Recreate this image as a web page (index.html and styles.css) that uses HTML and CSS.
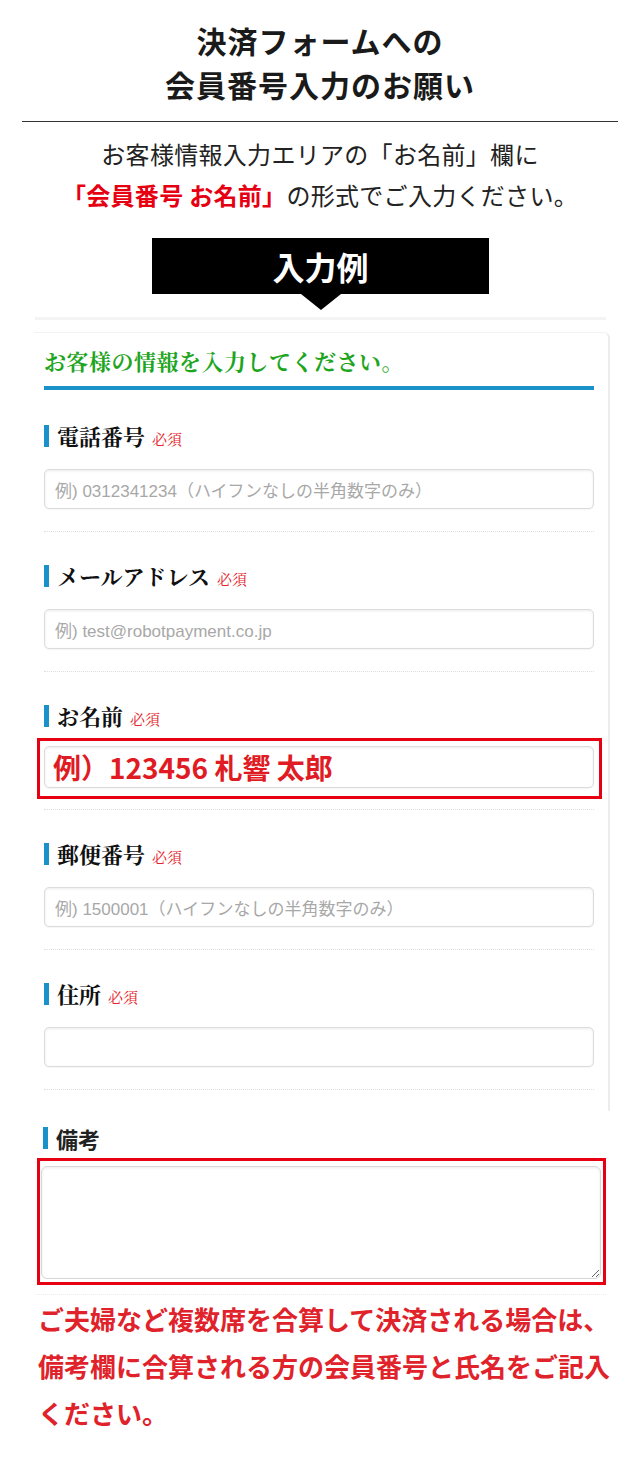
FILE: index.html
```html
<!DOCTYPE html>
<html lang="ja">
<head>
<meta charset="utf-8">
<title>決済フォームへの会員番号入力のお願い</title>
<link rel="stylesheet" href="styles.css">
</head>
<body>
<div class="page">
  <h1 class="title">決済フォームへの<br>会員番号入力のお願い</h1>
  <hr class="rule">
  <p class="intro">お客様情報入力エリアの「お名前」欄に<br><span class="em">「会員番号 お名前」</span>の形式でご入力ください。</p>
  <div class="example-wrap"><div class="example">入力例</div></div>
  <div class="shot-top"></div>
  <div class="card">
    <h2 class="card-title">お客様の情報を入力してください。</h2>
    <div class="field first">
      <div class="label"><span class="bar"></span><span class="label-text">電話番号</span><span class="req">必須</span></div>
      <div class="input placeholder">例) 0312341234（ハイフンなしの半角数字のみ）</div>
    </div>
    <div class="field">
      <div class="label"><span class="bar"></span><span class="label-text">メールアドレス</span><span class="req">必須</span></div>
      <div class="input placeholder">例) test@robotpayment.co.jp</div>
    </div>
    <div class="field name">
      <div class="label"><span class="bar"></span><span class="label-text">お名前</span><span class="req">必須</span></div>
      <div class="highlight">
        <div class="input name-input">例）123456 札響 太郎</div>
      </div>
    </div>
    <div class="field">
      <div class="label"><span class="bar"></span><span class="label-text">郵便番号</span><span class="req">必須</span></div>
      <div class="input placeholder">例) 1500001（ハイフンなしの半角数字のみ）</div>
    </div>
    <div class="field">
      <div class="label"><span class="bar"></span><span class="label-text">住所</span><span class="req">必須</span></div>
      <div class="input"></div>
    </div>
  </div>
  <div class="remarks">
    <div class="label sans"><span class="bar"></span><span class="label-text">備考</span></div>
    <div class="red-box"><textarea class="textarea"></textarea></div>
  </div>
  <p class="note">ご夫婦など複数席を合算して決済される場合は、備考欄に合算される方の会員番号と氏名をご記入ください。</p>
</div>
</body>
</html>
```
FILE: styles.css
```css
* { box-sizing: border-box; }
html, body { margin: 0; padding: 0; background: #fff; }
body {
  font-family: "Noto Sans CJK JP", "Noto Sans", sans-serif;
  color: #222;
}
.page { width: 640px; }

.title {
  margin: 0;
  padding-top: 18px;
  font-size: 30px;
  line-height: 44px;
  font-weight: 700;
  text-align: center;
  color: #1a1a1a;
  letter-spacing: 1px;
}
.rule {
  margin: 15px 22px 0;
  border: 0;
  border-top: 1px solid #333;
  height: 0;
}
.intro {
  margin: 11px 0 0;
  font-size: 24px;
  line-height: 41px;
  text-align: center;
  color: #222;
  letter-spacing: 0.3px;
}
.intro .em { color: #e60012; font-weight: 700; }

.example-wrap {
  display: flex;
  justify-content: center;
  margin-top: 23px;
  padding-left: 1px;
}
.example {
  position: relative;
  width: 337px;
  height: 56px;
  background: #000;
  color: #fff;
  font-size: 32px;
  font-weight: 700;
  line-height: 56px;
  text-align: center;
}
.example::after {
  content: "";
  position: absolute;
  left: 50%;
  top: 100%;
  margin-left: -20px;
  border-left: 20px solid transparent;
  border-right: 20px solid transparent;
  border-top: 16px solid #000;
}

.shot-top {
  margin: 23px 34px 0 35px;
  height: 3px;
  background: #f4f4f4;
}

.card {
  margin: 12px 30px 0 34px;
  padding: 13px 14px 21px 10px;
  border-top: 1px solid #f3f3f3;
  border-right: 2px solid #ececec;
  border-top-right-radius: 6px;
}
.card-title {
  margin: 0;
  padding-bottom: 10px;
  border-bottom: 4px solid #1a91c9;
  font-family: "Noto Serif CJK JP", "Noto Sans CJK JP", serif;
  font-size: 22px;
  line-height: 30px;
  font-weight: 700;
  color: #1ea51e;
  letter-spacing: 0.5px;
}

.field {
  padding: 32px 0 22px;
  border-bottom: 1px dotted #dedede;
}
.field.first { padding-top: 34px; }
.field.name { padding-bottom: 21px; }
.field.name .label { margin-bottom: 18px; }

.label {
  display: flex;
  align-items: center;
  height: 24px;
  margin-bottom: 21px;
}
.bar {
  width: 5px;
  height: 22px;
  background: #1a91c9;
  margin-right: 8px;
  flex: none;
}
.label-text {
  font-family: "Noto Serif CJK JP", "Noto Sans CJK JP", serif;
  font-size: 22px;
  font-weight: 700;
  line-height: 24px;
  color: #111;
}
.req {
  margin-left: 7px;
  margin-top: 5px;
  font-family: "Noto Serif CJK JP", "Noto Sans CJK JP", serif;
  font-size: 15px;
  line-height: 20px;
  color: #e4262c;
}

.input {
  height: 40px;
  border: 1px solid #dcdcdc;
  border-radius: 5px;
  background: #fff;
  box-shadow: inset 0 1px 3px rgba(0, 0, 0, 0.08), 0 1px 1px rgba(0, 0, 0, 0.04);
  padding: 0 10px;
  display: flex;
  align-items: center;
  font-family: "Liberation Sans", "Noto Sans CJK JP", sans-serif;
  font-size: 17px;
  white-space: nowrap;
}
.placeholder { color: #a8a8a8; }

.highlight { position: relative; }
.highlight::after {
  content: "";
  position: absolute;
  top: -8px;
  bottom: -11px;
  left: -7px;
  right: -8px;
  border: 3px solid #e60012;
  pointer-events: none;
}
.name-input {
  height: 42px;
  padding-left: 8px;
  font-family: "Noto Sans CJK JP", sans-serif;
  font-size: 28px;
  font-weight: 700;
  color: #e01b24;
}

.remarks {
  margin: 0 34px 0 35px;
  padding: 15px 0 9px 2px;
  border-bottom: 1px dotted #ececec;
}
.remarks .label { margin-bottom: 8px; padding-left: 6px; }
.label.sans .label-text {
  font-family: "Noto Sans CJK JP", sans-serif;
  color: #222;
}
.red-box {
  border: 3px solid #e60012;
  padding: 5px 2px 3px 1px;
}
.textarea {
  display: block;
  width: 100%;
  height: 113px;
  margin: 0;
  border: 1px solid #d8d8d8;
  border-radius: 6px;
  background: #fff;
  box-shadow: inset 0 1px 3px rgba(0, 0, 0, 0.08);
  resize: vertical;
  font-family: "Liberation Sans", sans-serif;
}

.note {
  margin: 0;
  padding: 0 28px 0 38px;
  font-size: 26px;
  line-height: 47px;
  font-weight: 700;
  color: #e0222b;
}
```
